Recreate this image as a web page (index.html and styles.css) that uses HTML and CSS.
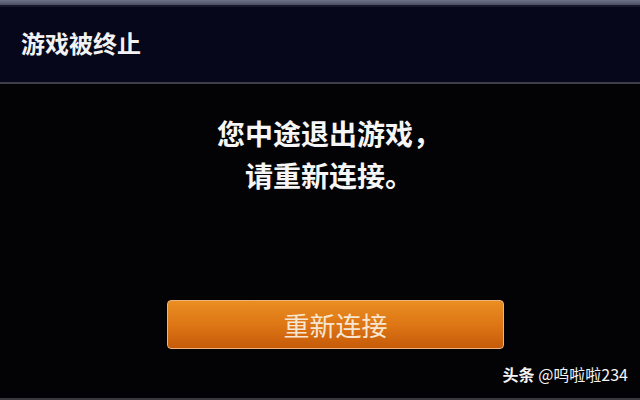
FILE: index.html
```html
<!DOCTYPE html>
<html lang="zh">
<head>
<meta charset="utf-8">
<link rel="stylesheet" href="styles.css">
</head>
<body>
<div class="screen">
  <div class="topbar"></div>
  <div class="header">
    <div class="title">游戏被终止</div>
  </div>
  <div class="divider"></div>
  <div class="content">
    <div class="message">
      <div class="line">您中途退出游戏，</div>
      <div class="line">请重新连接。</div>
    </div>
    <div class="btn">重新连接</div>
  </div>
  <div class="watermark"><b>头条</b> @呜啦啦234</div>
</div>
</body>
</html>
```
FILE: styles.css
```css
html, body {
  margin: 0;
  padding: 0;
  width: 640px;
  height: 400px;
  overflow: hidden;
  background: #030305;
}
.screen {
  position: relative;
  width: 640px;
  height: 400px;
  display: flex;
  flex-direction: column;
  background: #030305;
  font-family: "Noto Sans CJK SC", "Liberation Sans", sans-serif;
  border-bottom: 2px solid #3a3a3e;
  box-sizing: border-box;
}
.topbar {
  height: 5px;
  background: linear-gradient(#6e7088, #4c4e66);
  border-bottom: 2px solid #15162a;
}
.header {
  height: 75px;
  background: #06071a;
  display: flex;
  align-items: center;
  padding-left: 21px;
  box-sizing: border-box;
}
.title {
  color: #f2f2f4;
  font-size: 24px;
  font-weight: 700;
  margin-top: -4px;
}
.divider {
  height: 2px;
  background: #3e3f4c;
}
.content {
  flex: 1;
  display: flex;
  flex-direction: column;
  align-items: center;
  background: #030306;
}
.message {
  margin-top: 28px;
  padding-left: 18px;
  color: #f6f6f6;
  font-size: 28px;
  font-weight: 700;
  line-height: 42px;
  text-align: center;
}
.btn {
  margin-top: 104px;
  margin-left: 31px;
  width: 337px;
  height: 49px;
  box-sizing: border-box;
  border: 1px solid #f0b37a;
  border-radius: 4px;
  background: linear-gradient(#ea8e22, #dc7414 55%, #c65a0a);
  color: #f7e6d2;
  font-size: 26px;
  font-weight: 400;
  display: flex;
  align-items: center;
  justify-content: center;
}
.watermark {
  position: absolute;
  right: 12px;
  bottom: 12px;
  color: #f4f4f4;
  font-size: 16px;
  font-family: "Noto Sans CJK SC", sans-serif;
}
.watermark b {
  font-weight: 700;
}
```
